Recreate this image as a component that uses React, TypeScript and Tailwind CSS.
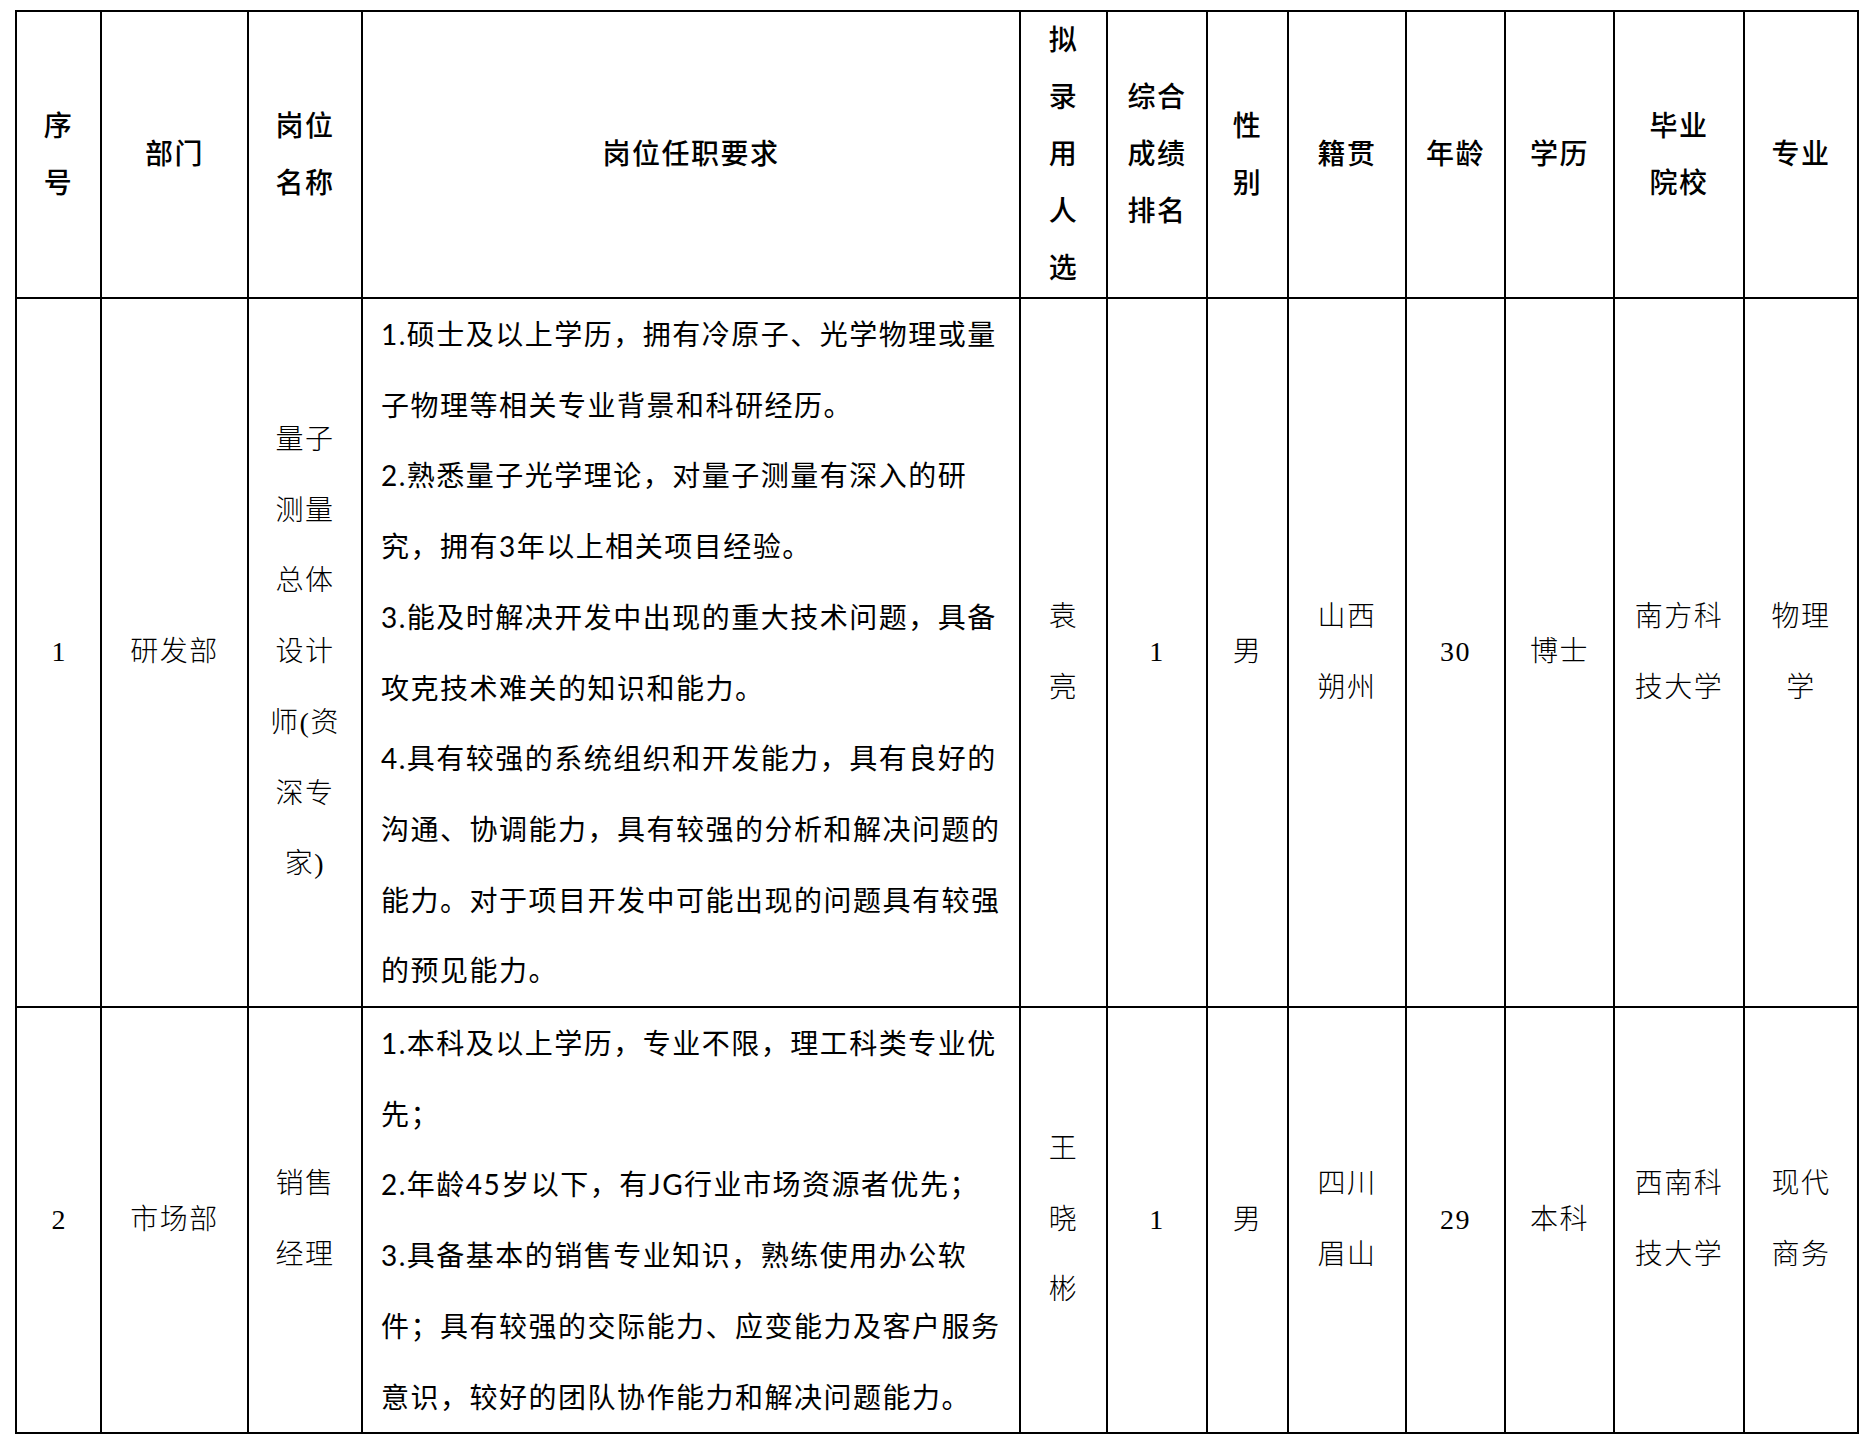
import React from "react";

const SERIF = "font-['Liberation_Serif','Noto_Sans_CJK_SC',serif]";
const REQ = "font-['Lato','Noto_Sans_CJK_SC',sans-serif]";

type Row = {
  no: string;
  dept: string[];
  title: string[];
  req: string[];
  name: string[];
  rank: string[];
  sex: string[];
  origin: string[];
  age: string[];
  edu: string[];
  school: string[];
  major: string[];
};

const headers: string[][] = [
  ["序", "号"],
  ["部门"],
  ["岗位", "名称"],
  ["岗位任职要求"],
  ["拟", "录", "用", "人", "选"],
  ["综合", "成绩", "排名"],
  ["性", "别"],
  ["籍贯"],
  ["年龄"],
  ["学历"],
  ["毕业", "院校"],
  ["专业"],
];

const widths = [
  "w-[85px]",
  "w-[147px]",
  "w-[114px]",
  "w-[658px]",
  "w-[87px]",
  "w-[100px]",
  "w-[81px]",
  "w-[118px]",
  "w-[99px]",
  "w-[109px]",
  "w-[130px]",
  "w-[114px]",
];

const rows: Row[] = [
  {
    no: "1",
    dept: ["研发部"],
    title: ["量子", "测量", "总体", "设计", "师(资", "深专", "家)"],
    req: [
      "1.硕士及以上学历，拥有冷原子、光学物理或量",
      "子物理等相关专业背景和科研经历。",
      "2.熟悉量子光学理论，对量子测量有深入的研",
      "究，拥有3年以上相关项目经验。",
      "3.能及时解决开发中出现的重大技术问题，具备",
      "攻克技术难关的知识和能力。",
      "4.具有较强的系统组织和开发能力，具有良好的",
      "沟通、协调能力，具有较强的分析和解决问题的",
      "能力。对于项目开发中可能出现的问题具有较强",
      "的预见能力。",
    ],
    name: ["袁", "亮"],
    rank: ["1"],
    sex: ["男"],
    origin: ["山西", "朔州"],
    age: ["30"],
    edu: ["博士"],
    school: ["南方科", "技大学"],
    major: ["物理", "学"],
  },
  {
    no: "2",
    dept: ["市场部"],
    title: ["销售", "经理"],
    req: [
      "1.本科及以上学历，专业不限，理工科类专业优",
      "先；",
      "2.年龄45岁以下，有JG行业市场资源者优先；",
      "3.具备基本的销售专业知识，熟练使用办公软",
      "件；具有较强的交际能力、应变能力及客户服务",
      "意识，较好的团队协作能力和解决问题能力。",
    ],
    name: ["王", "晓", "彬"],
    rank: ["1"],
    sex: ["男"],
    origin: ["四川", "眉山"],
    age: ["29"],
    edu: ["本科"],
    school: ["西南科", "技大学"],
    major: ["现代", "商务"],
  },
];

function Lines({ lines }: { lines: string[] }) {
  return (
    <>
      {lines.map((l, i) => (
        <div key={i} className="whitespace-nowrap">
          {l}
        </div>
      ))}
    </>
  );
}

const cell = "border-2 border-black p-0 align-middle text-center";

export default function App() {
  return (
    <div className="min-h-screen bg-white pt-[10px] pl-[15px] text-black">
      <table className="table-fixed border-collapse w-[1842px]">
        <colgroup>
          {widths.map((w, i) => (
            <col key={i} className={w} />
          ))}
        </colgroup>
        <thead>
          <tr className="h-[286px]">
            {headers.map((h, i) => (
              <th
                key={i}
                className={`${cell} ${SERIF} text-[28px] leading-[57px] font-medium tracking-[1.5px]`}
              >
                <Lines lines={h} />
              </th>
            ))}
          </tr>
        </thead>
        <tbody>
          {rows.map((r) => (
            <tr key={r.no}>
              <td className={`${cell} ${SERIF} text-[28px] leading-[70.7px]`}>{r.no}</td>
              {[r.dept, r.title].map((v, i) => (
                <td key={i} className={`${cell} ${SERIF} text-[28px] leading-[70.7px] font-light tracking-[1.5px]`}>
                  <Lines lines={v} />
                </td>
              ))}
              <td className={`${cell} ${REQ} text-left pl-[18px] text-[28px] leading-[70.7px] tracking-[1.5px]`}>
                <Lines lines={r.req} />
              </td>
              {[r.name, r.rank, r.sex, r.origin, r.age, r.edu, r.school, r.major].map((v, i) => (
                <td key={i} className={`${cell} ${SERIF} text-[28px] leading-[70.7px] font-light tracking-[1.5px]`}>
                  <Lines lines={v} />
                </td>
              ))}
            </tr>
          ))}
        </tbody>
      </table>
    </div>
  );
}
